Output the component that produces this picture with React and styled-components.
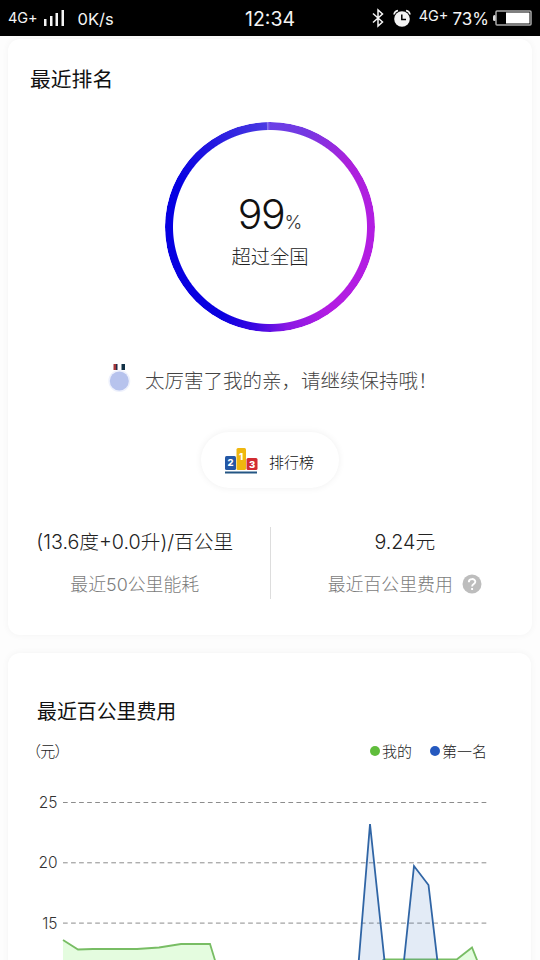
import React from "react";
import styled, { createGlobalStyle } from "styled-components";

const GlobalStyle = createGlobalStyle`
  * {
    box-sizing: border-box;
  }
  body {
    margin: 0;
    background: #fdfdfd;
    font-family: Inter, "Noto Sans CJK SC", sans-serif;
    font-weight: 300;
    overflow: hidden;
  }
  h2 {
    margin: 0;
  }
`;

const Screen = styled.div`
  width: 540px;
  height: 960px;
  overflow: hidden;
  display: flex;
  flex-direction: column;
`;

const StatusBar = styled.header`
  flex: none;
  height: 36px;
  padding: 0 8px;
  display: grid;
  grid-template-columns: 1fr auto 1fr;
  align-items: center;
  background: #000;
  color: #f4f4f4;
  font-weight: 400;
  font-size: 17px;
  line-height: 34px;
`;

const StatusGroup = styled.div`
  display: flex;
  align-items: center;
  justify-content: ${props => (props.$end ? "flex-end" : "flex-start")};
  height: 36px;
`;

const Network = styled.span`
  font-size: 14.5px;
  letter-spacing: ${props => props.$spacing || "0"};
  line-height: 16px;
  padding-bottom: ${props => props.$lift || "0"};
`;

const Signal = styled.svg`
  margin: 0 12px 0 6px;
`;

const Speed = styled.span`
  font-size: 16.5px;
  padding-top: 2px;
`;

const Clock = styled.span`
  font-size: 19.5px;
  padding-top: 2px;
`;

const Percent = styled.span`
  font-size: 17px;
  padding-top: 2px;
  margin: 0 4px 0 4px;
`;

const Card = styled.section`
  flex: none;
  width: ${props => props.$width};
  height: ${props => props.$height};
  margin: ${props => props.$margin};
  border-radius: 12px;
  background: #fff;
  box-shadow: 0 0 6px 1px rgba(0, 0, 0, 0.035);
  display: flex;
  flex-direction: column;
`;

const Title = styled.h2`
  font-size: ${props => props.$size};
  font-weight: 400;
  line-height: 30px;
  padding: ${props => props.$padding};
  color: #111;
`;

const Ring = styled.div`
  position: relative;
  align-self: center;
  width: 210px;
  height: 210px;
  margin-top: 27px;
  display: flex;
  flex-direction: column;
  align-items: center;
  &::before {
    content: "";
    position: absolute;
    inset: 0;
    border-radius: 50%;
    background: conic-gradient(
      #6a40e6 0deg,
      #7438e2 20deg,
      #ab22dc 50deg,
      #b31de2 90deg,
      #b31de2 145deg,
      #8a18e4 170deg,
      #3c08e2 188deg,
      #0a00e0 208deg,
      #0500e2 295deg,
      #2418e0 325deg,
      #4a3ae2 358deg,
      #8a78ee 358.5deg,
      #6a40e6 360deg
    );
    mask: radial-gradient(circle, transparent 96.5px, #000 97.5px);
  }
`;

const Score = styled.div`
  margin-top: 67px;
  line-height: 50px;
  font-size: 41px;
  letter-spacing: -1.2px;
  color: #111;
  small {
    font-size: 19px;
    letter-spacing: 0;
    color: #333;
  }
`;

const ScoreLabel = styled.div`
  margin-top: -6px;
  font-size: 19.3px;
  line-height: 30px;
  color: #222;
`;

const Praise = styled.div`
  display: flex;
  align-items: center;
  height: 34px;
  margin-top: 30px;
  padding-left: 92px;
  font-size: 19.5px;
  color: #444;
  white-space: nowrap;
  svg {
    margin: 2px 14px 0 0;
  }
`;

const RankButton = styled.button`
  align-self: center;
  display: flex;
  align-items: center;
  width: 138px;
  height: 56px;
  margin-top: 36px;
  padding: 2px 0 0 23px;
  border: 0;
  border-radius: 28px;
  background: #fff;
  box-shadow: 0 0 6px 1px rgba(0, 0, 0, 0.05);
  color: #111;
  font: inherit;
  font-size: 15px;
  svg {
    margin-right: 11px;
  }
`;

const Stats = styled.div`
  display: grid;
  grid-template-columns: 1fr 1px 1fr;
  height: 71px;
  margin-top: 39px;
`;

const Divider = styled.i`
  background: #ddd;
`;

const Stat = styled.div`
  display: flex;
  flex-direction: column;
  align-items: center;
  padding-right: ${props => props.$right || "0"};
  padding-left: ${props => props.$left || "0"};
  white-space: nowrap;
`;

const StatValue = styled.div`
  font-size: 19.7px;
  line-height: 30px;
  color: #222;
`;

const StatLabel = styled.div`
  display: flex;
  align-items: center;
  margin-top: 14px;
  font-size: 17.9px;
  line-height: 28px;
  color: #7c7c7c;
  svg {
    margin: -2px 0 0 9px;
  }
`;

const ChartHead = styled.div`
  display: flex;
  align-items: center;
  height: 24px;
  margin-top: 11px;
  padding: 0 44px 0 18px;
  font-size: 15px;
  color: #222;
`;

const Unit = styled.span`
  margin-right: auto;
  letter-spacing: -0.8px;
`;

const Legend = styled.span`
  display: flex;
  align-items: center;
  margin-left: 18px;
  &::before {
    content: "";
    width: 10px;
    height: 10px;
    margin: 2px 2px 0 0;
    border-radius: 50%;
    background: ${props => props.$color};
  }
`;

const Chart = styled.svg`
  display: block;
  margin-top: 1px;
  text {
    font-size: 15.5px;
    fill: #333;
  }
`;

const TICKS = [25, 20, 15];

const MINE_LEFT = [
  [63, 940],
  [78, 949.5],
  [93, 949],
  [137, 949],
  [159, 947.5],
  [181, 944],
  [210, 944],
  [218, 970]
];

const MINE_RIGHT = [
  [372, 970],
  [384, 959.3],
  [457, 959.3],
  [472, 947.5],
  [481, 970]
];

const FIRST = [
  [
    [358, 970],
    [370, 824],
    [385.5, 970]
  ],
  [
    [403, 970],
    [414, 866],
    [428.5, 885],
    [438.5, 970]
  ]
];

const toPoints = points => points.map(p => p.join(",")).join(" ");

const StatusIcon = styled.svg`
  margin-right: 8px;
`;

const BluetoothIcon = () => (
  <StatusIcon width="14" height="20" viewBox="0 0 14 20">
    <path
      d="M2 5.5 11.5 14 7 18V2l4.5 4L2 14.5"
      fill="none"
      stroke="#f4f4f4"
      strokeWidth="1.5"
    />
  </StatusIcon>
);

const AlarmIcon = () => (
  <StatusIcon width="18" height="19" viewBox="0 0 18 19">
    <circle cx="9" cy="10" r="7.8" fill="#f4f4f4" />
    <path
      d="M1 5.5C1.3 3.5 2.7 2 5 1.5M17 5.5C16.7 3.5 15.3 2 13 1.5"
      fill="none"
      stroke="#f4f4f4"
      strokeWidth="1.6"
    />
    <path d="M8.8 5.5v5h4.2" fill="none" stroke="#000" strokeWidth="1.5" />
  </StatusIcon>
);

const BatteryIcon = () => (
  <svg width="39" height="16" viewBox="0 0 39 16">
    <rect x="0" y="5" width="3" height="6" rx="1.5" fill="#ddd" />
    <rect x="3" y="1" width="35" height="14" rx="1" fill="none" stroke="#aaa" strokeWidth="1.5" />
    <rect x="13" y="2.5" width="23.5" height="11" fill="#fff" />
  </svg>
);

const MedalIcon = () => (
  <svg width="31" height="34" viewBox="0 0 31 34">
    <path d="M13.5 1h2.5v6h-2.5z" fill="#a33438" />
    <path d="M16 1h1.5v6H16z" fill="#222b4a" />
    <path d="M21.500 1h3.500v6h-3.500z" fill="#123247" />
    <circle cx="19.3" cy="18" r="11" fill="#eef1fc" />
    <circle cx="19.3" cy="18" r="9.5" fill="#b7c3ed" />
  </svg>
);

const PodiumIcon = () => (
  <svg width="34" height="28" viewBox="0 0 34 28">
    <rect x="1" y="9" width="11" height="14" rx="1.5" fill="#2457a5" />
    <rect x="12.5" y="1" width="9.5" height="22" rx="1.5" fill="#efb70f" />
    <rect x="22.5" y="11" width="11" height="12" rx="1.5" fill="#d12b32" />
    <rect x="1" y="24.5" width="32" height="2" fill="#245684" />
    <g fill="#fff" fontSize="9.5" fontWeight="800" textAnchor="middle">
      <text x="6.5" y="19">2</text>
      <text x="17" y="12.5">1</text>
      <text x="28" y="20.5">3</text>
    </g>
  </svg>
);

const HelpIcon = () => (
  <svg width="20" height="20" viewBox="0 0 20 20">
    <circle cx="10" cy="10" r="9.5" fill="#bdbdbd" />
    <path
      d="M6.8 8.2c0-4.2 6.5-4 6.5-.4 0 2.3-3.2 2.2-3.2 4.7M10.100 14v2"
      fill="none"
      stroke="#fff"
      strokeWidth="1.9"
    />
  </svg>
);

const CostChart = () => (
  <Chart width="523" height="197" viewBox="8 763 523 197">
    {TICKS.map((tick, i) => {
      const y = 802.5 + i * 60.3;
      return (
        <g key={tick}>
          <text x="57.5" y={y + 5.5} textAnchor="end">
            {tick}
          </text>
          <line x1="63" x2="487" y1={y} y2={y} stroke="#8c8c8c" strokeDasharray="4.7 3.35" />
        </g>
      );
    })}
    {[MINE_LEFT, MINE_RIGHT].map((points, i) => (
      <g key={i}>
        <polygon
          points={`${toPoints(points)} ${points[points.length - 1][0]},970 ${points[0][0]},970`}
          fill="#dffbd9"
          fillOpacity="0.85"
        />
        <polyline points={toPoints(points)} fill="none" stroke="#78bd64" strokeWidth="1.8" />
      </g>
    ))}
    {FIRST.map((points, i) => (
      <polyline
        key={i}
        points={toPoints(points)}
        fill="#2961b9"
        fillOpacity="0.13"
        stroke="#3065a5"
        strokeWidth="1.8"
      />
    ))}
  </Chart>
);

const App = () => {
  return (
    <Screen>
      <GlobalStyle />
      <StatusBar>
        <StatusGroup>
          <Network $spacing="-0.1px">4G+</Network>
          <Signal width="22" height="16" viewBox="0 0 22 16">
            <path d="M1 9h2.5v7H1zM7 6h2.5v10H7zM12.5 3H15v13h-2.5zM18.5 0H21v16h-2.5z" fill="#f4f4f4" />
          </Signal>
          <Speed>0K/s</Speed>
        </StatusGroup>
        <Clock>12:34</Clock>
        <StatusGroup $end>
          <BluetoothIcon />
          <AlarmIcon />
          <Network $lift="5px">4G+</Network>
          <Percent>73%</Percent>
          <BatteryIcon />
        </StatusGroup>
      </StatusBar>

      <Card $width="524px" $height="596px" $margin="3px 0 0 8px">
        <Title $size="20.8px" $padding="26px 0 0 22px">
          最近排名
        </Title>
        <Ring>
          <Score>
            99<small>%</small>
          </Score>
          <ScoreLabel>超过全国</ScoreLabel>
        </Ring>
        <Praise>
          <MedalIcon />
          太厉害了我的亲，请继续保持哦！
        </Praise>
        <RankButton>
          <PodiumIcon />
          排行榜
        </RankButton>
        <Stats>
          <Stat $right="8px">
            <StatValue>(13.6度+0.0升)/百公里</StatValue>
            <StatLabel>最近50公里能耗</StatLabel>
          </Stat>
          <Divider />
          <Stat $left="7px">
            <StatValue>9.24元</StatValue>
            <StatLabel>
              最近百公里费用
              <HelpIcon />
            </StatLabel>
          </Stat>
        </Stats>
      </Card>

      <Card $width="523px" $height="340px" $margin="18px 0 0 8px">
        <Title $size="19.9px" $padding="44px 0 0 29px">
          最近百公里费用
        </Title>
        <ChartHead>
          <Unit>（元）</Unit>
          <Legend $color="#60bd3c">我的</Legend>
          <Legend $color="#2559bf">第一名</Legend>
        </ChartHead>
        <CostChart />
      </Card>
    </Screen>
  );
};

export default App;
